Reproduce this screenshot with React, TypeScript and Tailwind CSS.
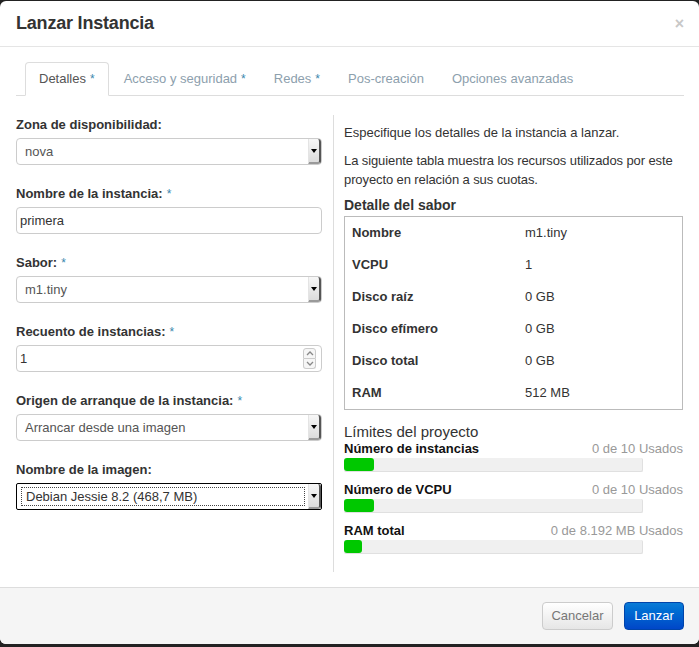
import React from "react";

const font = { fontFamily: '"Liberation Sans", Arial, sans-serif' };

function Req() {
    return <span className="text-[#3a87ad] font-normal text-[12px] ml-1">*</span>;
}

function SelectArrow() {
    return (
        <span className="absolute right-0 top-0 bottom-0 w-[13px] bg-gradient-to-b from-[#f7f7f7] to-[#dcdcdc] border-l border-[#e4e4e4] border-r-2 border-r-[#555] border-b-2 border-b-[#9a9a9a] rounded-r-[3px] flex items-center justify-center">
            <span className="block w-0 h-0 border-l-[3px] border-r-[3px] border-t-[4px] border-l-transparent border-r-transparent border-t-black" />
        </span>
    );
}

function SelectBox({ value, focused }: { value: string; focused?: boolean }) {
    return (
        <div
            className={`relative h-[27px] w-full bg-white text-[13px] text-[#555] flex items-center ${
                focused ? "border border-black rounded-[2px]" : "border border-[#ccc] rounded-[4px]"
            }`}
        >
            {focused ? (
                <div className="absolute left-[4px] top-[3px] bottom-[3px] right-[16px] border border-dotted border-[#444] flex items-center pl-[4px] text-[#333]">
                    {value}
                </div>
            ) : (
                <span className="pl-[8px]">{value}</span>
            )}
            <SelectArrow />
        </div>
    );
}

function TextBox({ value, spinner }: { value: string; spinner?: boolean }) {
    return (
        <div className="relative h-[27px] w-full bg-white border border-[#ccc] rounded-[4px] text-[13px] text-[#333] flex items-center pl-[3px]">
            {value}
            {spinner && (
                <div className="absolute right-[5px] top-[2px] bottom-[2px] w-[13px] flex flex-col">
                    <div className="flex-1 border border-[#ccc] rounded-t-[3px] bg-[#f6f6f6] flex items-center justify-center">
                        <svg width="8" height="5" viewBox="0 0 8 5">
                            <path d="M1 4 L4 1 L7 4" fill="none" stroke="#888" strokeWidth="1.3" />
                        </svg>
                    </div>
                    <div className="flex-1 border border-t-0 border-[#ccc] rounded-b-[3px] bg-[#f6f6f6] flex items-center justify-center">
                        <svg width="8" height="5" viewBox="0 0 8 5">
                            <path d="M1 1 L4 4 L7 1" fill="none" stroke="#888" strokeWidth="1.3" />
                        </svg>
                    </div>
                </div>
            )}
        </div>
    );
}

function Field({ label, req, children }: { label: string; req?: boolean; children: React.ReactNode }) {
    return (
        <div className="mb-[20px]">
            <div className="h-[18px] leading-[18px] mb-[4px] text-[13px] font-bold text-[#333]">
                {label}
                {req && <Req />}
            </div>
            {children}
        </div>
    );
}

const flavor = [
    ["Nombre", "m1.tiny"],
    ["VCPU", "1"],
    ["Disco raíz", "0 GB"],
    ["Disco efímero", "0 GB"],
    ["Disco total", "0 GB"],
    ["RAM", "512 MB"],
];

const limits = [
    { name: "Número de instancias", used: "0 de 10 Usados", fill: 30 },
    { name: "Número de VCPU", used: "0 de 10 Usados", fill: 30 },
    { name: "RAM total", used: "0 de 8.192 MB Usados", fill: 18 },
];

const tabs = [
    { name: "Detalles", req: true, active: true },
    { name: "Acceso y seguridad", req: true },
    { name: "Redes", req: true },
    { name: "Pos-creación" },
    { name: "Opciones avanzadas" },
];

export default function App() {
    return (
        <div className="h-[647px] w-[699px] bg-[#222] pt-px overflow-hidden" style={font}>
            <div className="h-[643px] bg-white rounded-[6px] flex flex-col overflow-hidden">
                {/* header */}
                <div className="h-[46px] border-b border-[#e5e5e5] flex items-center justify-between pl-4 pr-[15px] shrink-0">
                    <h3 className="text-[18px] font-bold text-[#333] tracking-[-0.2px]">Lanzar Instancia</h3>
                    <span className="text-[16px] font-bold text-[#c8c8c8] leading-none">×</span>
                </div>

                {/* body */}
                <div className="flex-1 pt-[15px] px-4 pb-[15px] flex flex-col">
                    <div className="flex border-b border-[#ddd] h-[34px] pl-[9px] mr-[-1px]">
                        {tabs.map((t) => (
                            <div
                                key={t.name}
                                className={`px-[13px] mr-[2px] flex items-center text-[13px] rounded-t-[4px] ${
                                    t.active ? "bg-white border border-[#ddd] border-b-white -mb-px text-[#555]" : "text-[#8da0ad]"
                                }`}
                            >
                                {t.name}
                                {t.req && <span className="text-[#3a87ad] ml-1 text-[12px]">*</span>}
                            </div>
                        ))}
                    </div>

                    <div className="flex flex-1 mt-[19px]">
                        <div className="w-[319px] pr-[11px] border-r border-[#ddd] pt-px">
                            <Field label="Zona de disponibilidad:">
                                <SelectBox value="nova" />
                            </Field>
                            <Field label="Nombre de la instancia:" req>
                                <TextBox value="primera" />
                            </Field>
                            <Field label="Sabor:" req>
                                <SelectBox value="m1.tiny" />
                            </Field>
                            <Field label="Recuento de instancias:" req>
                                <TextBox value="1" spinner />
                            </Field>
                            <Field label="Origen de arranque de la instancia:" req>
                                <SelectBox value="Arrancar desde una imagen" />
                            </Field>
                            <Field label="Nombre de la imagen:">
                                <SelectBox value="Debian Jessie 8.2 (468,7 MB)" focused />
                            </Field>
                        </div>

                        <div className="flex-1 pl-[10px] pt-[9px] text-[13px] text-[#333]">
                            <p className="leading-[18px]">Especifique los detalles de la instancia a lanzar.</p>
                            <p className="leading-[19px] mt-[9px] whitespace-nowrap tracking-[-0.1px]">
                                La siguiente tabla muestra los recursos utilizados por este
                                <br />
                                proyecto en relación a sus cuotas.
                            </p>
                            <h4 className="mt-[8px] text-[14px] font-bold leading-[17px]">Detalle del sabor</h4>
                            <div className="border border-[#bbb] w-[339px] mt-[2px]">
                                {flavor.map(([k, v]) => (
                                    <div key={k} className="flex h-[32px] items-center">
                                        <span className="w-[180px] pl-[7px] font-bold">{k}</span>
                                        <span>{v}</span>
                                    </div>
                                ))}
                            </div>

                            <h4 className="mt-[13px] text-[15px] leading-[18px] text-[#333]">Límites del proyecto</h4>
                            {limits.map((l) => (
                                <div key={l.name} className="mb-[10px] w-[339px]">
                                    <div className="flex justify-between leading-[16px]">
                                        <span className="font-bold text-[#111]">{l.name}</span>
                                        <span className="text-[#999]">{l.used}</span>
                                    </div>
                                    <div className="w-[299px] h-[14px] bg-[#f0f0f0] border-r border-b border-[#e0e0e0] mt-[1px] rounded-[2px]">
                                        <div className="h-full bg-[#00c800] rounded-[3px]" style={{ width: l.fill }} />
                                    </div>
                                </div>
                            ))}
                        </div>
                    </div>
                </div>

                {/* footer */}
                <div className="h-[57px] border-t border-[#ddd] bg-[#f5f5f5] flex items-center justify-end gap-[11px] pr-[15px] shrink-0">
                    <button className="h-[28px] w-[71px] rounded-[4px] border border-[#ccc] bg-gradient-to-b from-white to-[#e6e6e6] text-[13px] text-[#777]">
                        Cancelar
                    </button>
                    <button className="h-[28px] w-[60px] rounded-[4px] border border-[#0044aa] bg-gradient-to-b from-[#0a7bd6] to-[#0046c8] text-[13px] text-white">
                        Lanzar
                    </button>
                </div>
            </div>
        </div>
    );
}
